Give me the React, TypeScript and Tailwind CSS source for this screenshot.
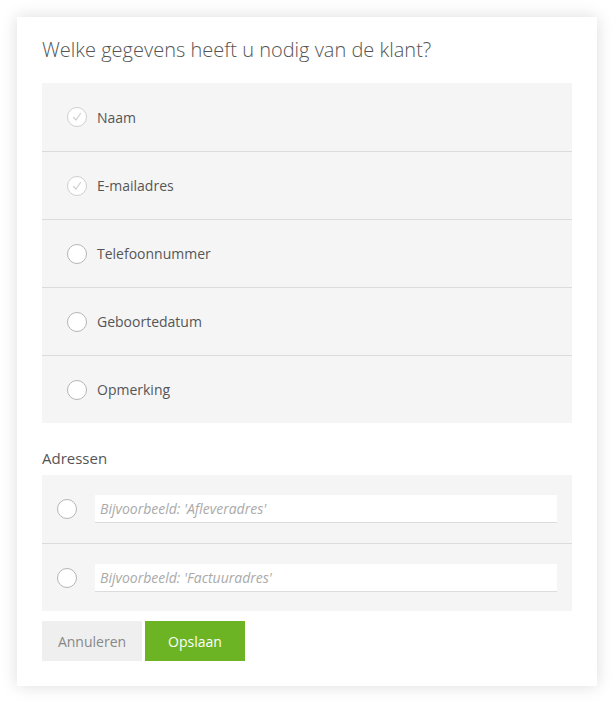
const fields = [
  { label: 'Naam', checked: true },
  { label: 'E-mailadres', checked: true },
  { label: 'Telefoonnummer', checked: false },
  { label: 'Geboortedatum', checked: false },
  { label: 'Opmerking', checked: false },
]

const addresses = ["Bijvoorbeeld: 'Afleveradres'", "Bijvoorbeeld: 'Factuuradres'"]

function Radio({ checked }: { checked?: boolean }) {
  return (
    <span className={`w-5 h-5 rounded-full shrink-0 flex items-center justify-center bg-white border ${checked ? 'border-[#cfcfcf]' : 'border-[#b5b5b5]'}`}>
      {checked && (
        <svg width="12" height="12" viewBox="0 0 12 12" fill="none">
          <path d="M2.5 6.5 L5 9 L9.5 2.5" stroke="#cfcfcf" strokeWidth="1.2" strokeLinecap="round" strokeLinejoin="round" />
        </svg>
      )}
    </span>
  )
}

export default function App() {
  return (
    <div className="min-h-[703px] bg-white pt-[17px] pl-[17px]" style={{ fontFamily: '"Open Sans", sans-serif' }}>
      <div className="w-[580px] bg-white px-[25px] pt-[18px] pb-[25px] shadow-[0_0_16px_rgba(0,0,0,0.14)]">
        <h1 className="text-[20px] leading-[30px] font-light text-[#555] mb-[18px]">Welke gegevens heeft u nodig van de klant?</h1>

        <div className="bg-[#f5f5f5]">
          {fields.map((f, i) => (
            <div key={f.label} className={`h-[68px] flex items-center gap-[10px] pl-[25px] ${i > 0 ? 'border-t border-[#dcdcdc]' : ''}`}>
              <Radio checked={f.checked} />
              <span className="text-[14px] text-[#555]">{f.label}</span>
            </div>
          ))}
        </div>

        <div className="mt-[25px] mb-[7px] text-[15px] leading-5 text-[#555]">Adressen</div>

        <div className="bg-[#f5f5f5]">
          {addresses.map((a, i) => (
            <div key={a} className={`h-[68px] flex items-center gap-[18px] px-[15px] ${i > 0 ? 'border-t border-[#dcdcdc]' : ''}`}>
              <Radio />
              <input
                placeholder={a}
                className="flex-1 h-[28px] bg-white border-b border-[#dcdcdc] px-[5px] text-[14px] italic text-[#555] placeholder:text-[#aaa] outline-none"
              />
            </div>
          ))}
        </div>

        <div className="flex gap-[3px] mt-[10px]">
          <button className="w-[100px] h-[40px] bg-[#efefef] text-[14px] text-[#888]">Annuleren</button>
          <button className="w-[100px] h-[40px] bg-[#6cb424] text-[14px] text-white">Opslaan</button>
        </div>
      </div>
    </div>
  )
}
